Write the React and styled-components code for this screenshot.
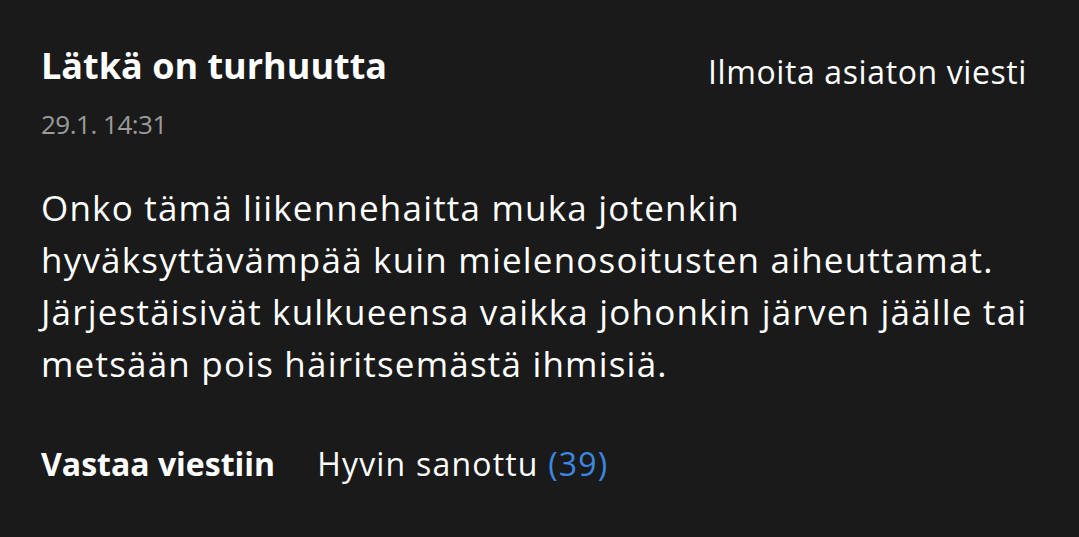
import styled, { createGlobalStyle } from "styled-components";

const GlobalStyle = createGlobalStyle`
  html, body {
    margin: 0;
    background: #1a1a1a;
  }
  body {
    font-family: "Open Sans", "Noto Sans", sans-serif;
    color: #fff;
  }
`;

const Comment = styled.article`
  padding: 40px 30px 0 41px;
`;

const Header = styled.header`
  display: flex;
  align-items: flex-start;
  justify-content: space-between;
`;

const Meta = styled.div`
  display: flex;
  flex-direction: column;
  gap: 14px;
`;

const Author = styled.h3`
  margin: 0;
  font-size: 36px;
  font-weight: 700;
  line-height: 52px;
`;

const Time = styled.time`
  font-size: 26px;
  line-height: 36px;
  letter-spacing: -0.5px;
  color: #9b9b9b;
`;

const ReportButton = styled.button`
  margin: 12px 22px 0 0;
  padding: 0;
  border: none;
  background: none;
  color: #fff;
  font: inherit;
  font-size: 32px;
  line-height: 40px;
  letter-spacing: 0.6px;
  cursor: pointer;
`;

const Body = styled.p`
  margin: 40px 0 0 0;
  font-size: 35px;
  line-height: 52px;
  letter-spacing: 1.2px;
`;

const Actions = styled.div`
  display: flex;
  align-items: baseline;
  gap: 42px;
  margin-top: 54px;
  font-size: 32px;
  line-height: 40px;
`;

const ReplyButton = styled.button`
  padding: 0;
  border: none;
  background: none;
  color: #fff;
  font: inherit;
  font-weight: 700;
  cursor: pointer;
`;

const LikeButton = styled.button`
  padding: 0;
  border: none;
  background: none;
  color: #fff;
  font: inherit;
  letter-spacing: 1.2px;
  cursor: pointer;
`;

const Count = styled.span`
  color: #3b88e2;
`;

export default function App() {
  return (
    <>
      <GlobalStyle />
      <Comment>
        <Header>
          <Meta>
            <Author>Lätkä on turhuutta</Author>
            <Time>29.1. 14:31</Time>
          </Meta>
          <ReportButton>Ilmoita asiaton viesti</ReportButton>
        </Header>
        <Body>
          Onko tämä liikennehaitta muka jotenkin hyväksyttävämpää kuin
          mielenosoitusten aiheuttamat. Järjestäisivät kulkueensa vaikka
          johonkin järven jäälle tai metsään pois häiritsemästä ihmisiä.
        </Body>
        <Actions>
          <ReplyButton>Vastaa viestiin</ReplyButton>
          <LikeButton>
            Hyvin sanottu <Count>(39)</Count>
          </LikeButton>
        </Actions>
      </Comment>
    </>
  );
}
